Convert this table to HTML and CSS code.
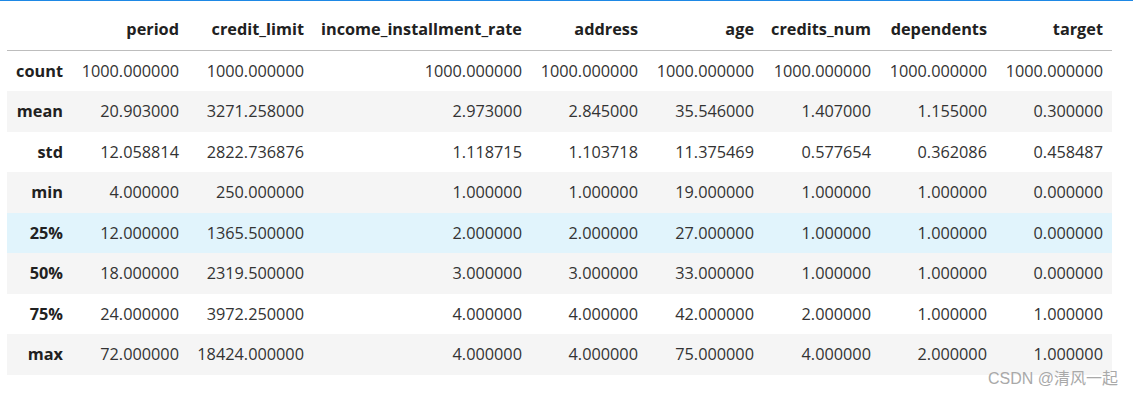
FILE: index.html
```html
<!DOCTYPE html>
<html lang="en">
<head>
  <meta charset="UTF-8">
  <title>describe()</title>
  <link rel="stylesheet" href="styles.css">
</head>
<body>
  <div class="cell">
    <table class="dataframe">
      <colgroup>
        <col class="c-index">
        <col class="c-num">
        <col class="c-wide">
        <col class="c-rate">
        <col class="c-num">
        <col class="c-num">
        <col class="c-num2">
        <col class="c-num">
        <col class="c-num">
      </colgroup>
      <thead>
        <tr>
          <th></th>
          <th>period</th>
          <th>credit_limit</th>
          <th>income_installment_rate</th>
          <th>address</th>
          <th>age</th>
          <th>credits_num</th>
          <th>dependents</th>
          <th>target</th>
        </tr>
      </thead>
      <tbody>
        <tr>
          <th>count</th>
          <td>1000.000000</td><td>1000.000000</td><td>1000.000000</td><td>1000.000000</td>
          <td>1000.000000</td><td>1000.000000</td><td>1000.000000</td><td>1000.000000</td>
        </tr>
        <tr>
          <th>mean</th>
          <td>20.903000</td><td>3271.258000</td><td>2.973000</td><td>2.845000</td>
          <td>35.546000</td><td>1.407000</td><td>1.155000</td><td>0.300000</td>
        </tr>
        <tr>
          <th>std</th>
          <td>12.058814</td><td>2822.736876</td><td>1.118715</td><td>1.103718</td>
          <td>11.375469</td><td>0.577654</td><td>0.362086</td><td>0.458487</td>
        </tr>
        <tr>
          <th>min</th>
          <td>4.000000</td><td>250.000000</td><td>1.000000</td><td>1.000000</td>
          <td>19.000000</td><td>1.000000</td><td>1.000000</td><td>0.000000</td>
        </tr>
        <tr class="hover">
          <th>25%</th>
          <td>12.000000</td><td>1365.500000</td><td>2.000000</td><td>2.000000</td>
          <td>27.000000</td><td>1.000000</td><td>1.000000</td><td>0.000000</td>
        </tr>
        <tr>
          <th>50%</th>
          <td>18.000000</td><td>2319.500000</td><td>3.000000</td><td>3.000000</td>
          <td>33.000000</td><td>1.000000</td><td>1.000000</td><td>0.000000</td>
        </tr>
        <tr>
          <th>75%</th>
          <td>24.000000</td><td>3972.250000</td><td>4.000000</td><td>4.000000</td>
          <td>42.000000</td><td>2.000000</td><td>1.000000</td><td>1.000000</td>
        </tr>
        <tr>
          <th>max</th>
          <td>72.000000</td><td>18424.000000</td><td>4.000000</td><td>4.000000</td>
          <td>75.000000</td><td>4.000000</td><td>2.000000</td><td>1.000000</td>
        </tr>
      </tbody>
    </table>
  </div>
  <div class="watermark">CSDN @清风一起</div>
</body>
</html>
```

FILE: styles.css
```css
body {
  margin: 0;
  background: #fff;
  font-family: 'Open Sans', 'Noto Sans', sans-serif;
  color: #212121;
}

.cell {
  border-top: 1px solid #1e88e5;
  padding: 8px 0 0 7px;
}

.dataframe {
  border-collapse: collapse;
  table-layout: fixed;
  width: 1105px;
  font-size: 16.3px;
}

.c-index { width: 65px; }
.c-num { width: 116px; }
.c-wide { width: 125px; }
.c-rate { width: 218px; }
.c-num2 { width: 117px; }

.dataframe th,
.dataframe td {
  text-align: right;
  padding: 0 9px 0 0;
  height: 40.5px;
  line-height: 20px;
  white-space: nowrap;
  vertical-align: middle;
}

.dataframe thead th {
  font-weight: 700;
  border-bottom: 1px solid #bdbdbd;
}

.dataframe tbody th {
  font-weight: 700;
}

.dataframe tbody td {
  color: #333;
}

.dataframe tbody tr:nth-child(even) {
  background: #f5f5f5;
}

.dataframe tbody tr.hover {
  background: #e1f4fc;
}

.watermark {
  position: absolute;
  right: 15px;
  top: 365px;
  font-family: 'Liberation Sans', 'Noto Sans CJK SC', sans-serif;
  font-size: 16px;
  color: #a9a9a9;
}
```
